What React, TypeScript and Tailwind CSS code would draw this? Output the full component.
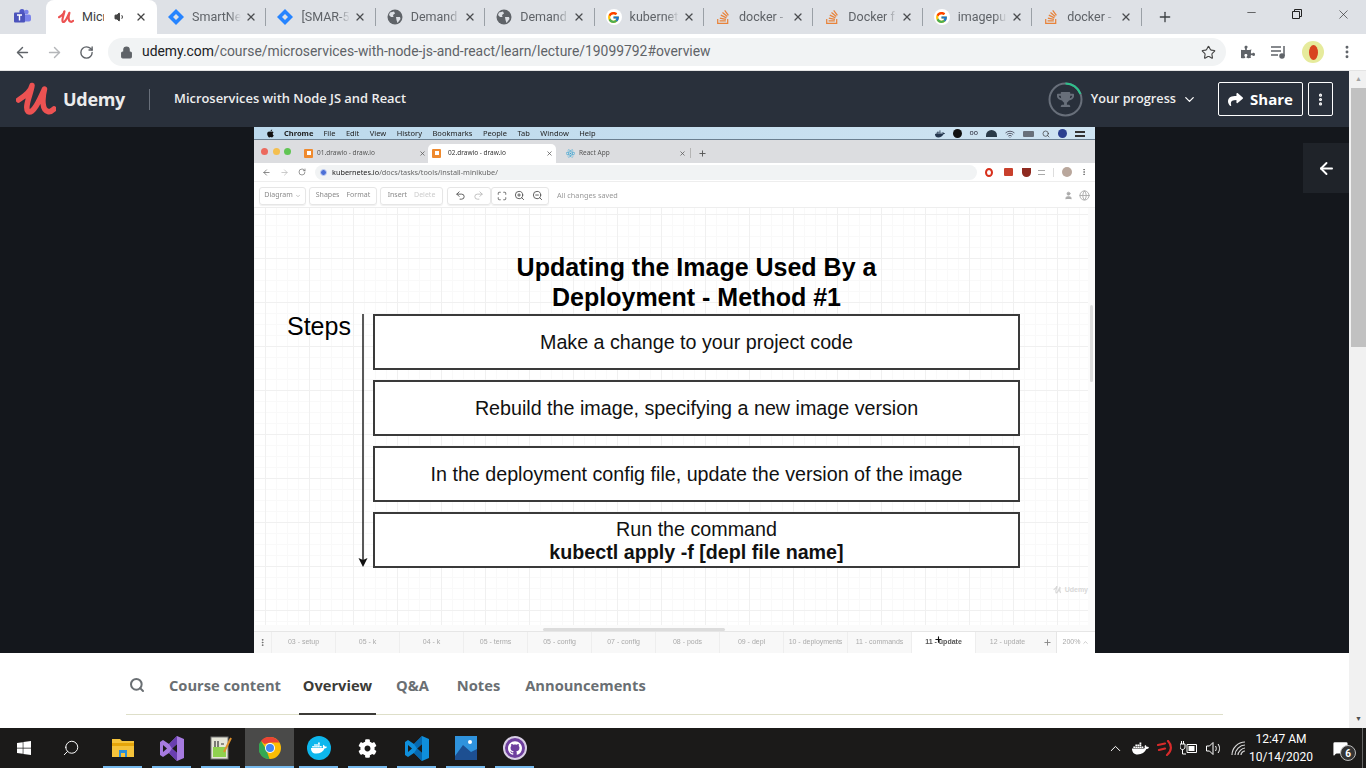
import { ArrowLeft, ArrowRight, ChevronDown, ChevronUp, Lock, Minus, MoreVertical, Plus, RotateCw, Search, Star, Volume1, Wifi, X, ZoomIn, ZoomOut, Maximize, Undo2, Redo2, User, Globe, MessageSquare } from "lucide-react";
import { FaApple, FaDocker, FaPuzzlePiece, FaShare, FaStackOverflow, FaTrophy, FaWindows, FaCog, FaReact } from "react-icons/fa";
import { FcGoogle } from "react-icons/fc";
import { SiGithub } from "react-icons/si";
import type { ReactNode } from "react";

const UI = "font-['Roboto',sans-serif]";

function GlobeDisc() {
  return (
    <svg width="16" height="16" viewBox="0 0 16 16">
      <circle cx="8" cy="8" r="7.5" fill="#5f6368" />
      <path d="M3 3.5 L7 2.5 L8 4.5 L6 6 L6.5 8 L4 8 L2 6 Z M9 8 L13 8 L13.5 10 L10.5 14 L9.5 11 Z" fill="#dee1e6" />
    </svg>
  );
}

function Diamond() {
  return (
    <svg width="16" height="16" viewBox="0 0 16 16">
      <path d="M8 0 L16 8 L8 16 L0 8 Z" fill="#2684ff" />
      <path d="M8 5 L11 8 L8 11 L5 8 Z" fill="#dee1e6" />
    </svg>
  );
}

function UdemyMark({ size = 40 }: { size?: number }) {
  return (
    <svg width={size} height={size * 0.85} viewBox="0 0 40 34" fill="none">
      <path
        d="M2.5 18 C9 14 15 9 16 3.5 C15 12 8 25 12 29.5 C17 33 24 17 28.5 7 C26 17 26 28 32 29.5 C34 30 36 29 38 27"
        stroke="#ec5252"
        strokeWidth="5.5"
        strokeLinecap="round"
        strokeLinejoin="round"
      />
    </svg>
  );
}

const browserTabs: { label: string; icon: ReactNode }[] = [
  { label: "SmartNe", icon: <Diamond /> },
  { label: "[SMAR-5", icon: <Diamond /> },
  { label: "Demand", icon: <GlobeDisc /> },
  { label: "Demand", icon: <GlobeDisc /> },
  { label: "kubernet", icon: <span className="flex w-4 h-4 items-center justify-center rounded-full bg-white"><FcGoogle size={13} /></span> },
  { label: "docker -", icon: <FaStackOverflow size={16} color="#e8833a" /> },
  { label: "Docker f", icon: <FaStackOverflow size={16} color="#e8833a" /> },
  { label: "imagepu", icon: <span className="flex w-4 h-4 items-center justify-center rounded-full bg-white"><FcGoogle size={13} /></span> },
  { label: "docker -", icon: <FaStackOverflow size={16} color="#e8833a" /> },
];

function TabStrip() {
  return (
    <div className={`${UI} h-[34px] flex-none flex bg-[#dee1e6] text-[12.5px]`}>
      <div className="w-[46px] flex-none flex items-center justify-center pr-[2px]">
        <svg width="17" height="16" viewBox="0 0 17 16">
          <circle cx="12.5" cy="3" r="2.2" fill="#7b83eb" />
          <rect x="9" y="5.5" width="8" height="7" rx="2" fill="#7b83eb" />
          <circle cx="8" cy="2.6" r="2.6" fill="#5059c9" />
          <rect x="0" y="3.5" width="11" height="10" rx="1" fill="#4b53bc" />
          <path d="M3 6 H8 M5.5 6 V11.5" stroke="#fff" strokeWidth="1.4" />
        </svg>
      </div>
      <div className="w-[111px] flex-none flex items-center bg-white rounded-t-[8px] pl-[12px] text-[#3c4043]">
        <UdemyMark size={16} />
        <span className="ml-[8px] w-[22px] overflow-hidden whitespace-nowrap">Micr</span>
        <Volume1 size={12} className="ml-[10px] text-[#444]" fill="#444" />
        <X size={12} strokeWidth={2.6} className="ml-[9px] text-[#444]" />
      </div>
      {browserTabs.map((t, i) => (
        <div key={i} className="w-[109.4px] flex-none flex items-center relative pl-[11px] text-[#5f6368]">
          {t.icon}
          <span className="ml-[8px] w-[49px] overflow-hidden whitespace-nowrap [mask-image:linear-gradient(90deg,#000_75%,transparent)]">{t.label}</span>
          <X size={12} strokeWidth={2.6} className="ml-[4px] text-[#4b4d50]" />
          <span className="absolute right-0 top-[8px] h-[18px] w-px bg-[#9aa0a6]" />
        </div>
      ))}
      <div className="w-[46px] flex-none flex items-center justify-center text-[#3c4043]"><Plus size={16} strokeWidth={2} /></div>
      <div className="flex-1" />
      <div className="w-[138px] flex-none flex items-start text-[#222]">
        <div className="w-[46px] flex justify-center pt-[6px]"><Minus size={13} strokeWidth={1.2} /></div>
        <div className="w-[46px] flex justify-center pt-[9px]">
          <svg width="10" height="10" viewBox="0 0 10 10" fill="none" stroke="#222"><path d="M0.5 2.5 H7.5 V9.5 H0.5 Z M2.5 2.5 V0.5 H9.5 V7.5 H7.5" /></svg>
        </div>
        <div className="w-[46px] flex justify-center pt-[7px]"><X size={15} strokeWidth={1} /></div>
      </div>
    </div>
  );
}

function AddressBar() {
  return (
    <div className={`${UI} h-[37px] flex-none flex items-center bg-white border-b border-[#e4e4e4] text-[#5f6368]`}>
      <ArrowLeft size={17} strokeWidth={2} className="ml-[14px]" />
      <ArrowRight size={17} strokeWidth={2} className="ml-[15px] text-[#b4b6b9]" />
      <RotateCw size={15} strokeWidth={2.2} className="ml-[16px]" />
      <div className="ml-[14px] w-[1118px] h-[28px] rounded-full bg-[#f1f3f4] flex items-center pl-[12px] pr-[10px]">
        <Lock size={13} fill="#5f6368" strokeWidth={2} />
        <span className="ml-[9px] text-[13.9px] leading-none whitespace-nowrap"><span className="text-[#202124]">udemy.com</span>/course/microservices-with-node-js-and-react/learn/lecture/19099792#overview</span>
        <div className="flex-1" />
        <Star size={15} strokeWidth={1.8} className="text-[#444]" />
      </div>
      <FaPuzzlePiece size={14} className="ml-[15px]" />
      <svg width="16" height="14" viewBox="0 0 16 14" className="ml-[16px]" fill="none" stroke="#5f6368" strokeWidth="1.5">
        <path d="M0 2 H10 M0 6 H10 M0 10 H7 M13 1 V11" />
        <circle cx="11" cy="11" r="2" fill="#5f6368" />
      </svg>
      <div className="ml-[15px] w-[22px] h-[22px] rounded-full bg-[#e6eb9c] flex items-center justify-center">
        <div className="w-[9px] h-[15px] rounded-[50%] bg-[#d8431f]" />
      </div>
      <MoreVertical size={16} strokeWidth={2.4} className="ml-[15px]" />
    </div>
  );
}

function CourseHeader() {
  return (
    <div className="h-[56px] flex-none flex items-center bg-[#29303b] font-['Open_Sans',sans-serif] text-white">
      <div className="ml-[16px]"><UdemyMark /></div>
      <span className="ml-[7px] text-[18px] font-bold text-[#ececec] tracking-[-0.3px]">Udemy</span>
      <div className="ml-[24px] w-px h-[21px] bg-[#686f7a]" />
      <span className="ml-[24px] text-[12.9px] font-semibold text-[#eee]">Microservices with Node JS and React</span>
      <div className="flex-1" />
      <div className="relative w-[35px] h-[35px] flex items-center justify-center">
        <svg width="35" height="35" viewBox="0 0 35 35" fill="none" className="absolute inset-0">
          <circle cx="17.5" cy="17.5" r="16" stroke="#686f7a" strokeWidth="2" />
          <path d="M17.5 1.5 A16 16 0 0 1 32.5 12" stroke="#2ec08b" strokeWidth="2" />
        </svg>
        <FaTrophy size={17} color="#686f7a" />
      </div>
      <span className="ml-[8px] text-[12.7px] font-semibold text-[#eee]">Your progress</span>
      <ChevronDown size={15} strokeWidth={2} className="ml-[6px]" />
      <div className="ml-[21px] w-[85px] h-[34px] border border-white rounded-[2px] flex items-center justify-center gap-[7px] text-[15px] font-bold">
        <FaShare size={15} />Share
      </div>
      <div className="ml-[5px] mr-[16px] w-[25px] h-[34px] border border-white rounded-[2px] flex items-center justify-center">
        <MoreVertical size={15} strokeWidth={3} />
      </div>
    </div>
  );
}

const macMenus = ["File", "Edit", "View", "History", "Bookmarks", "People", "Tab", "Window", "Help"];

function MacMenuBar() {
  return (
    <div className="h-[13px] flex-none flex items-center bg-[linear-gradient(90deg,#bcd9ec,#cfe4f2)] border-b border-[#6b7f90] text-[7.5px] text-[#222] pl-[12px] pr-[10px] pt-[1px]">
      <FaApple size={9} color="#111" />
      <span className="ml-[9px] font-bold">Chrome</span>
      <div className="ml-[10px] flex gap-[10.5px]">{macMenus.map((m) => <span key={m}>{m}</span>)}</div>
      <div className="flex-1" />
      <div className="flex items-center gap-[8px] text-[#223]">
        <FaDocker size={10} color="#26384f" />
        <span className="w-[9px] h-[9px] rounded-full bg-[#111]" />
        <span className="text-[7px]">oo</span>
        <span className="w-[11px] h-[7px] rounded-t-full bg-[#2a3a48]" />
        <Wifi size={10} className="text-[#445]" />
        <span className="w-[11px] h-[6px] bg-[#68707a] rounded-[1px]" />
        <Search size={8} className="text-[#333]" />
        <span className="w-[9px] h-[9px] rounded-full bg-[#2a3f8f]" />
        <span className="w-[10px] h-[6px] border-y-2 border-[#333]" />
      </div>
    </div>
  );
}

function DrawioFavicon() {
  return <span className="w-[9px] h-[9px] flex-none rounded-[1px] bg-[#ef8a2e] flex items-center justify-center"><span className="w-[4px] h-[4px] bg-white" /></span>;
}

function MacTabs() {
  return (
    <div className="h-[23px] flex-none flex items-end bg-[#dcdde0] text-[6.5px] text-[#555]">
      <div className="self-center flex gap-[4.5px] pl-[7px] w-[47px]">
        <span className="w-[7px] h-[7px] rounded-full bg-[#ec6a5e]" />
        <span className="w-[7px] h-[7px] rounded-full bg-[#f4bf4f]" />
        <span className="w-[7px] h-[7px] rounded-full bg-[#61c554]" />
      </div>
      <div className="w-[127px] h-[19px] flex items-center pl-[3px] pb-[1px]">
        <DrawioFavicon />
        <span className="ml-[4px] w-[102px]">01.drawio - draw.io</span>
        <X size={7} strokeWidth={2.5} />
      </div>
      <div className="w-[128px] h-[19px] flex items-center bg-white rounded-t-[5px] pl-[3px] pb-[1px]">
        <span className="ml-[1px]"><DrawioFavicon /></span>
        <span className="ml-[7px] w-[98px] text-[#333]">02.drawio - draw.io</span>
        <X size={7} strokeWidth={2.5} />
      </div>
      <div className="h-[19px] flex items-center pl-[10px] pb-[1px]">
        <FaReact size={9} color="#2f9fd0" />
        <span className="ml-[4px] w-[100px]">React App</span>
        <X size={7} strokeWidth={2.5} />
      </div>
      <div className="h-[19px] flex items-center pl-[4px] pb-[1px]">
        <span className="w-px h-[10px] bg-[#b5b5b5]" />
        <Plus size={9} strokeWidth={2.5} className="ml-[7px]" />
      </div>
    </div>
  );
}

function MacToolbar() {
  return (
    <div className="h-[19px] flex-none flex items-center bg-white border-b border-[#eeeeee] text-[#666]">
      <ArrowLeft size={9} className="ml-[8px]" />
      <ArrowRight size={9} className="ml-[9px] text-[#bbb]" />
      <RotateCw size={8} className="ml-[9px]" />
      <div className="ml-[9px] w-[662px] h-[15px] rounded-full bg-[#f1f3f4] flex items-center pl-[5px] text-[7.3px]">
        <span className="w-[7px] h-[7px] rounded-full bg-[#4c6fd6] border border-[#c7d3f3]" />
        <span className="ml-[5px]"><span className="text-[#222]">kubernetes.io</span>/docs/tasks/tools/install-minikube/</span>
      </div>
      <span className="ml-[8px] w-[8px] h-[9px] rounded-[50%] border-2 border-[#d8301c]" />
      <span className="ml-[11px] w-[9px] h-[8px] bg-[#c9402c] rounded-[1px]" />
      <span className="ml-[9px] w-[9px] h-[9px] rounded-b-full bg-[#8f2a20]" />
      <span className="ml-[7px] w-[7px] h-[5px] border-y border-[#aaa]" />
      <span className="ml-[8px] w-px h-[9px] bg-[#ddd]" />
      <span className="ml-[8px] w-[10px] h-[10px] rounded-full bg-[#b9a79c]" />
      <MoreVertical size={8} strokeWidth={2.5} className="ml-[8px]" />
    </div>
  );
}

function ToolGroup({ children, w }: { children: ReactNode; w: string }) {
  return <div className={`${w} h-[18px] flex-none flex items-center justify-center gap-[7px] border border-[#e6e6e6] rounded-[3px] shadow-[0_1px_1px_#f0f0f0]`}>{children}</div>;
}

function DrawioToolbar() {
  return (
    <div className="h-[26px] flex-none flex items-center bg-white border-b border-[#eeeeee] text-[7px] text-[#8a8a8a] pl-[5px] pt-[2px]">
      <ToolGroup w="w-[47px]"><span className="flex items-center gap-[2px]">Diagram<ChevronDown size={6} /></span></ToolGroup>
      <div className="w-[3px]" />
      <ToolGroup w="w-[68px]"><span>Shapes</span><span>Format</span></ToolGroup>
      <div className="w-[3px]" />
      <ToolGroup w="w-[63px]"><span>Insert</span><span className="text-[#ccc]">Delete</span></ToolGroup>
      <div className="w-[4px]" />
      <ToolGroup w="w-[44px]"><Undo2 size={11} className="text-[#555]" /><Redo2 size={11} className="text-[#bbb]" /></ToolGroup>
      <ToolGroup w="w-[58px]"><Maximize size={10} className="text-[#555]" /><ZoomIn size={11} className="text-[#555]" /><ZoomOut size={11} className="text-[#555]" /></ToolGroup>
      <span className="ml-[8px] text-[7.3px] text-[#999]">All changes saved</span>
      <div className="flex-1" />
      <User size={9} className="text-[#aaa]" fill="#aaa" />
      <Globe size={11} className="ml-[6px] mr-[5px] text-[#aaa]" />
    </div>
  );
}

function StepBox({ children }: { children: ReactNode }) {
  return <div className="w-[647px] h-[56px] flex-none flex flex-col items-center justify-center border-2 border-[#3a3a3a] bg-white pt-[1px] text-[19.7px] leading-[23px] text-[#111]">{children}</div>;
}

function Canvas() {
  return (
    <div className="flex-1 min-h-0 flex bg-white font-['Liberation_Sans',sans-serif]">
      <div className="relative flex-1 min-w-0 pt-[44px] bg-[linear-gradient(#f0f0f0_1px,transparent_1px),linear-gradient(90deg,#f0f0f0_1px,transparent_1px),linear-gradient(#f9f9f9_1px,transparent_1px),linear-gradient(90deg,#f9f9f9_1px,transparent_1px)] bg-size-[44px_44px,44px_44px,11px_11px,11px_11px] bg-position-[0_6px,11px_0,0_6px,0_0]">
        <div className="ml-[119px] w-[647px] text-center text-[25px] leading-[30px] font-bold text-black">
          Updating the Image Used By a<br />Deployment - Method #1
        </div>
        <div className="mt-[2px] flex items-start">
          <span className="ml-[33px] w-[71px] text-[25px] leading-[24px] text-black">Steps</span>
          <svg width="10" height="253" viewBox="0 0 10 253" className="flex-none" fill="none">
            <path d="M5 0 V246" stroke="#222" strokeWidth="1.5" />
            <path d="M0.5 244 L5 253 L9.5 244 L5 246 Z" fill="#111" />
          </svg>
          <div className="ml-[5px] flex flex-col gap-[10px]">
            <StepBox>Make a change to your project code</StepBox>
            <StepBox>Rebuild the image, specifying a new image version</StepBox>
            <StepBox>In the deployment config file, update the version of the image</StepBox>
            <StepBox><span>Run the command</span><span className="font-bold">kubectl apply -f [depl file name]</span></StepBox>
          </div>
        </div>
        <span className="absolute right-[0px] bottom-[30px] flex items-center gap-[2px] text-[7px] font-bold text-[#d8d8d8]">
          <svg width="10" height="9" viewBox="0 0 40 34" fill="none"><path d="M2.5 18 C9 14 15 9 16 3.5 C15 12 8 25 12 29.5 C17 33 24 17 28.5 7 C26 17 26 28 32 29.5" stroke="#d8d8d8" strokeWidth="5" /></svg>
          Udemy
        </span>
      </div>
      <div className="w-[7px] flex-none pt-[97px] flex justify-center bg-[#fbfbfb]">
        <div className="w-[3px] h-[77px] rounded-full bg-[#dddddd]" />
      </div>
    </div>
  );
}

const sheets = ["03 - setup", "05 - k", "04 - k", "05 - terms", "05 - config", "07 - config", "08 - pods", "09 - depl", "10 - deployments", "11 - commands", "11 - update", "12 - update"];

function SheetTabs() {
  return (
    <div className="flex-none blur-[0.25px]">
      <div className="h-[7px] bg-[#fbfbfb] border-b border-[#e6e6e6] pt-[3px]">
        <div className="ml-[289px] w-[182px] h-[3px] rounded-full bg-[#dcdcdc]" />
      </div>
      <div className="relative h-[21px] flex bg-[#f8f8f8] text-[7px] text-[#aaaaaa] font-['Liberation_Sans',sans-serif]">
        <div className="w-[17px] flex-none flex items-center justify-center text-[#666]"><MoreVertical size={9} strokeWidth={2.5} /></div>
        {sheets.map((s) => (
          <div key={s} className={`w-[64px] flex-none flex items-center justify-center border-l border-[#eeeeee] whitespace-nowrap ${s === "11 - update" ? "bg-white font-bold text-[#555]" : ""}`}>{s}</div>
        ))}
        <div className="w-[17px] flex-none flex items-center justify-center text-[#888]"><Plus size={9} strokeWidth={2.5} /></div>
        <div className="flex-1 flex items-center justify-center gap-[2px] border-l border-[#e6e6e6] bg-white"><span>200%</span><ChevronUp size={7} /></div>
        <Plus size={9} strokeWidth={3} className="absolute left-[680px] top-[3px] text-[#111]" />
      </div>
    </div>
  );
}

function VideoSlide() {
  return (
    <div className="w-[841px] flex-none flex flex-col bg-white">
      <div className="flex-none flex flex-col blur-[0.25px]">
        <MacMenuBar />
        <MacTabs />
        <MacToolbar />
        <DrawioToolbar />
      </div>
      <Canvas />
      <SheetTabs />
    </div>
  );
}

function VideoStage() {
  return (
    <div className="relative h-[526px] flex-none flex bg-[#14171c] pl-[254px]">
      <VideoSlide />
      <div className="absolute right-0 top-[16px] w-[46px] h-[50px] bg-[#1f2329] flex items-center justify-center text-white">
        <ArrowLeft size={19} strokeWidth={2.4} />
      </div>
    </div>
  );
}

function LectureTabs() {
  return (
    <div className="flex-1 bg-white font-['Open_Sans',sans-serif] pl-[126px] pr-[126px]">
      <div className="h-[62px] flex items-stretch border-b border-[#dedfc9] w-[1097px] text-[14.7px] font-bold text-[#6a6f73]">
        <div className="w-[39px] flex items-center pl-[3px] pt-[3px]"><Search size={16} strokeWidth={3} /></div>
        <div className="flex items-center px-[4px] pt-[3px]">Course content</div>
        <div className="ml-[14px] w-[77px] flex items-center justify-center pt-[4px] text-[#3c3b37] border-b-2 border-[#3c3b37] -mb-px">Overview</div>
        <div className="ml-[20px] flex items-center pt-[3px]">Q&amp;A</div>
        <div className="ml-[28px] flex items-center pt-[3px]">Notes</div>
        <div className="ml-[25px] flex items-center pt-[3px]">Announcements</div>
      </div>
    </div>
  );
}

function ChromeLogo() {
  return (
    <svg width="22" height="22" viewBox="0 0 22 22">
      <circle cx="11" cy="11" r="11" fill="#fbbc05" />
      <path d="M11 0 A11 11 0 0 1 20.5 5.5 L11 5.5 L5.5 7 L2 4 A11 11 0 0 1 11 0 Z" fill="#ea4335" />
      <path d="M2 4 L7 12 L10.5 22 A11 11 0 0 1 2 4 Z" fill="#34a853" />
      <circle cx="11" cy="11" r="5" fill="#fff" />
      <circle cx="11" cy="11" r="4" fill="#4285f4" />
    </svg>
  );
}

function VsLogo({ front, back }: { front: string; back: string }) {
  return (
    <svg width="24" height="25" viewBox="0 0 24 25">
      <path d="M17 0 L24 3 V22 L17 25 L9 17 L3 21 L0 19 V6 L3 4 L9 8 Z M17 8 L12 12.5 L17 17 Z M3 9 V16 L7 12.5 Z" fill={front} fillRule="evenodd" />
      <path d="M17 0 L9 8 L12 12.5 L17 8 Z M17 25 L9 17 L12 12.5 L17 17 Z" fill={back} />
    </svg>
  );
}

const taskApps: { key: string; icon: ReactNode; active?: boolean }[] = [
  {
    key: "explorer",
    icon: (
      <svg width="22" height="18" viewBox="0 0 22 18">
        <path d="M0 0 H8 L10 2 H22 V18 H0 Z" fill="#f5c33b" />
        <path d="M0 4 H22 V7 H0 Z" fill="#e5a50a" />
        <path d="M7 11 H15 V18 H13 V14 H9 V18 H7 Z" fill="#2b8fd8" />
      </svg>
    ),
  },
  { key: "vs", icon: <VsLogo front="#a77be0" back="#6a3fb0" /> },
  {
    key: "notepad",
    icon: (
      <svg width="22" height="24" viewBox="0 0 22 24">
        <rect x="1" y="1" width="17" height="22" fill="#e6e6d8" stroke="#777" />
        <rect x="3" y="11" width="13" height="10" fill="#8fd14f" />
        <path d="M5 5 V11 M8 5 V11 M11 8 H14" stroke="#333" strokeWidth="1.2" />
        <path d="M14 16 L21 2" stroke="#e0902a" strokeWidth="2" />
      </svg>
    ),
  },
  { key: "chrome", active: true, icon: <ChromeLogo /> },
  {
    key: "docker",
    icon: <span className="w-[24px] h-[24px] rounded-full bg-[#0db7ed] flex items-center justify-center"><FaDocker size={16} color="#fff" /></span>,
  },
  { key: "settings", icon: <FaCog size={19} color="#fff" /> },
  { key: "code", icon: <VsLogo front="#0f8fdc" back="#0669b0" /> },
  {
    key: "photos",
    icon: (
      <svg width="22" height="24" viewBox="0 0 22 24">
        <rect width="22" height="24" fill="#2f93dd" />
        <circle cx="15" cy="6" r="2" fill="#fff" />
        <path d="M0 20 L8 9 L16 16 L22 13 V24 H0 Z" fill="#1d4f91" />
      </svg>
    ),
  },
  {
    key: "github",
    icon: <span className="w-[24px] h-[24px] rounded-full bg-[#6e3f9e] border-2 border-[#d9cfe5] flex items-center justify-center"><SiGithub size={14} color="#fff" /></span>,
  },
];

function Taskbar() {
  return (
    <div className={`${UI} h-[40px] flex-none flex items-stretch bg-[#1b1a19] text-white`}>
      <div className="w-[48px] flex items-center justify-center"><FaWindows size={16} /></div>
      <div className="w-[46px] flex items-center justify-center"><Search size={18} strokeWidth={1.3} className="-scale-x-100" /></div>
      <div className="w-[4px]" />
      {taskApps.map((a) => (
        <div key={a.key} className={`w-[49px] flex-none relative flex items-center justify-center ${a.active ? "bg-[#4a4a49]" : ""}`}>
          {a.icon}
          <span className={`absolute bottom-0 h-[2px] bg-[#76b9ed] ${a.active ? "left-0 right-0" : "left-[5px] right-[5px]"}`} />
        </div>
      ))}
      <div className="flex-1" />
      <div className="flex items-center">
        <ChevronUp size={17} strokeWidth={1.4} />
        <FaDocker size={17} className="ml-[8px]" />
        <svg width="16" height="16" viewBox="0 0 16 16" className="ml-[8px]" fill="none" stroke="#d92b2b" strokeWidth="2.2" strokeLinecap="round"><path d="M1 5 L8 3.5 M2 10 L8 8.5 M11 1 C15 5 15 11 10 15" /></svg>
        <svg width="18" height="14" viewBox="0 0 18 14" className="ml-[7px]" fill="none" stroke="#fff" strokeWidth="1">
          <path d="M0 3 H5 V6 C5 8 3.5 8.5 2.5 8.5 C1.5 8.5 0 8 0 6 Z M2.5 8.5 V13 H6 M1.5 3 V0 M3.5 3 V0" />
          <path d="M7 3.5 H16.5 V11.5 H7 Z" />
          <rect x="8.5" y="5" width="6" height="5" fill="#fff" stroke="none" />
        </svg>
        <svg width="16" height="15" viewBox="0 0 16 15" className="ml-[8px]" fill="none" stroke="#fff" strokeWidth="1">
          <path d="M0.5 5 H3.5 L7 1.5 V13.5 L3.5 10 H0.5 Z M9.5 5 C10.5 6.5 10.5 8.5 9.5 10 M12 3 C14 5.5 14 9.5 12 12" />
        </svg>
        <svg width="16" height="15" viewBox="0 0 16 15" className="ml-[9px]" fill="none" stroke="#d8d8d8" strokeWidth="1.2">
          <path d="M1 14 C1 7 7 1 14 1 M4 14 C4 9 9 4 14 4 M7 14 C7 11 11 7 14 7 M10 14 C10 12 12 10 14 10" />
        </svg>
      </div>
      <div className="ml-[1px] w-[66px] flex flex-col items-center justify-center text-[12px] leading-[18px]">
        <span>12:47 AM</span>
        <span className="whitespace-nowrap">10/14/2020</span>
      </div>
      <div className="w-[44px] relative flex items-center justify-center ml-[4px]">
        <MessageSquare size={17} fill="#fff" strokeWidth={0} />
        <span className="absolute left-[22px] top-[17px] w-[16px] h-[16px] rounded-full bg-[#333] border border-[#bbb] flex items-center justify-center text-[10px] font-bold">6</span>
      </div>
      <div className="w-[4px] border-l border-[#666]" />
    </div>
  );
}

function PageScrollbar() {
  return (
    <div className="w-[17px] flex-none flex flex-col items-center bg-[#f1f1f1] pl-[2px]">
      <div className="h-[17px] flex items-center justify-center text-[7px] text-[#a3a3a3]">▲</div>
      <div className="w-[15px] h-[259px] bg-[#c1c1c1]" />
      <div className="flex-1" />
      <div className="h-[17px] flex items-center justify-center text-[7px] text-[#505050]">▼</div>
    </div>
  );
}

export default function App() {
  return (
    <div className="w-[1366px] h-[768px] flex flex-col overflow-hidden bg-white">
      <TabStrip />
      <AddressBar />
      <div className="flex-1 min-h-0 flex">
        <div className="flex-1 min-w-0 flex flex-col">
          <CourseHeader />
          <VideoStage />
          <LectureTabs />
        </div>
        <PageScrollbar />
      </div>
      <Taskbar />
    </div>
  );
}
